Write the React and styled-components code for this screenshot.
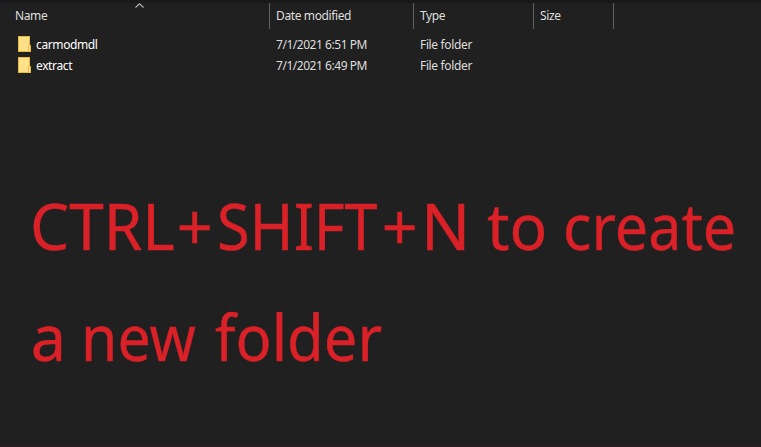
import React from "react";
import styled, { createGlobalStyle } from "styled-components";

const GlobalStyle = createGlobalStyle`
  * { box-sizing: border-box; }
  body { margin: 0; background: #202020; }
`;

const Window = styled.main`
  width: 761px;
  height: 447px;
  overflow: hidden;
  background: #202020;
  border-top: 3px solid #191919;
  border-bottom: 1px solid #271f22;
  font-family: "Noto Sans", "Open Sans", sans-serif;
  font-size: 12px;
  letter-spacing: -0.38px;
  color: #dedede;
`;

const columns = "270px 144px 120px 80px";

const Header = styled.header`
  display: grid;
  grid-template-columns: ${columns};
  height: 25px;
  position: relative;
`;

const HeaderCell = styled.div`
  border-right: 1px solid #636363;
  padding-left: ${(p) => p.$inset}px;
  line-height: 26px;
  white-space: nowrap;
`;

const SortArrow = styled.svg`
  position: absolute;
  left: 134px;
  top: 0;
`;

const List = styled.section`
  padding-top: 6px;
`;

const Row = styled.div`
  display: grid;
  grid-template-columns: ${columns};
  height: 21px;
  line-height: 21px;
`;

const Cell = styled.div`
  padding-left: 6px;
  white-space: nowrap;
  letter-spacing: ${(p) => p.$tracking ?? -0.35}px;
`;

const NameCell = styled.div`
  display: flex;
  align-items: center;
  gap: 5px;
  padding-left: 18px;
  color: #fff;
`;

const Folder = styled.svg`
  flex: none;
  margin-bottom: 1px;
`;

const Caption = styled.p`
  margin: 94px 0 0;
  font-size: 63px;
  line-height: 111px;
  letter-spacing: 0;
  color: #da2128;
  -webkit-text-stroke: 0.4px #da2128;
  white-space: nowrap;
`;

const Line = styled.span`
  display: flex;
  padding-left: ${(p) => p.$inset}px;
`;

const Word = styled.span`
  flex: none;
  width: ${(p) => p.$width}px;
  transform: scaleX(${(p) => p.$stretch || 1});
  transform-origin: left;
`;

const FolderIcon = () => (
  <Folder width="13" height="16" viewBox="0 0 13 16">
    <path d="M0 0H12V9H13V16H0Z" fill="#e9bd3b" />
    <path d="M1 1H11V9L10 10V15H1Z" fill="#ffe08a" />
    <path d="M11 10H12V15H11Z" fill="#ffe08a" />
  </Folder>
);

const files = [
  { name: "carmodmdl", date: "7/1/2021 6:51 PM" },
  { name: "extract", date: "7/1/2021 6:49 PM" },
];

export default function App() {
  return (
    <>
      <GlobalStyle />
      <Window>
        <Header>
          <HeaderCell $inset={15}>Name</HeaderCell>
          <HeaderCell $inset={6}>Date modified</HeaderCell>
          <HeaderCell $inset={6}>Type</HeaderCell>
          <HeaderCell $inset={6}>Size</HeaderCell>
          <SortArrow width="11" height="9" viewBox="0 0 11 9">
            <path d="M1.5 4.5L5.5 .8L9.5 4.5" fill="none" stroke="#b0b0b0" strokeWidth="1.2" />
          </SortArrow>
        </Header>
        <List>
          {files.map((f) => (
            <Row key={f.name}>
              <NameCell>
                <FolderIcon />
                {f.name}
              </NameCell>
              <Cell $tracking={-0.46}>{f.date}</Cell>
              <Cell>File folder</Cell>
            </Row>
          ))}
        </List>
        <Caption>
          <Line $inset={29.5}>
            <Word $width={147.3} $stretch={0.985}>CTRL</Word>
            <Word $width={40.7}>+</Word>
            <Word $width={164.3} $stretch={0.943}>SHIFT</Word>
            <Word $width={39}>+</Word>
            <Word $width={65.9} $stretch={1.03}>N</Word>
            <Word $width={76} $stretch={0.99}>to</Word>
            <Word $width={180} $stretch={0.941}>create</Word>
          </Line>
          <Line $inset={30.7}>
            <Word $width={50.1}>a</Word>
            <Word $width={133.9} $stretch={0.937}>new</Word>
            <Word $width={180} $stretch={0.948}>folder</Word>
          </Line>
        </Caption>
      </Window>
    </>
  );
}
